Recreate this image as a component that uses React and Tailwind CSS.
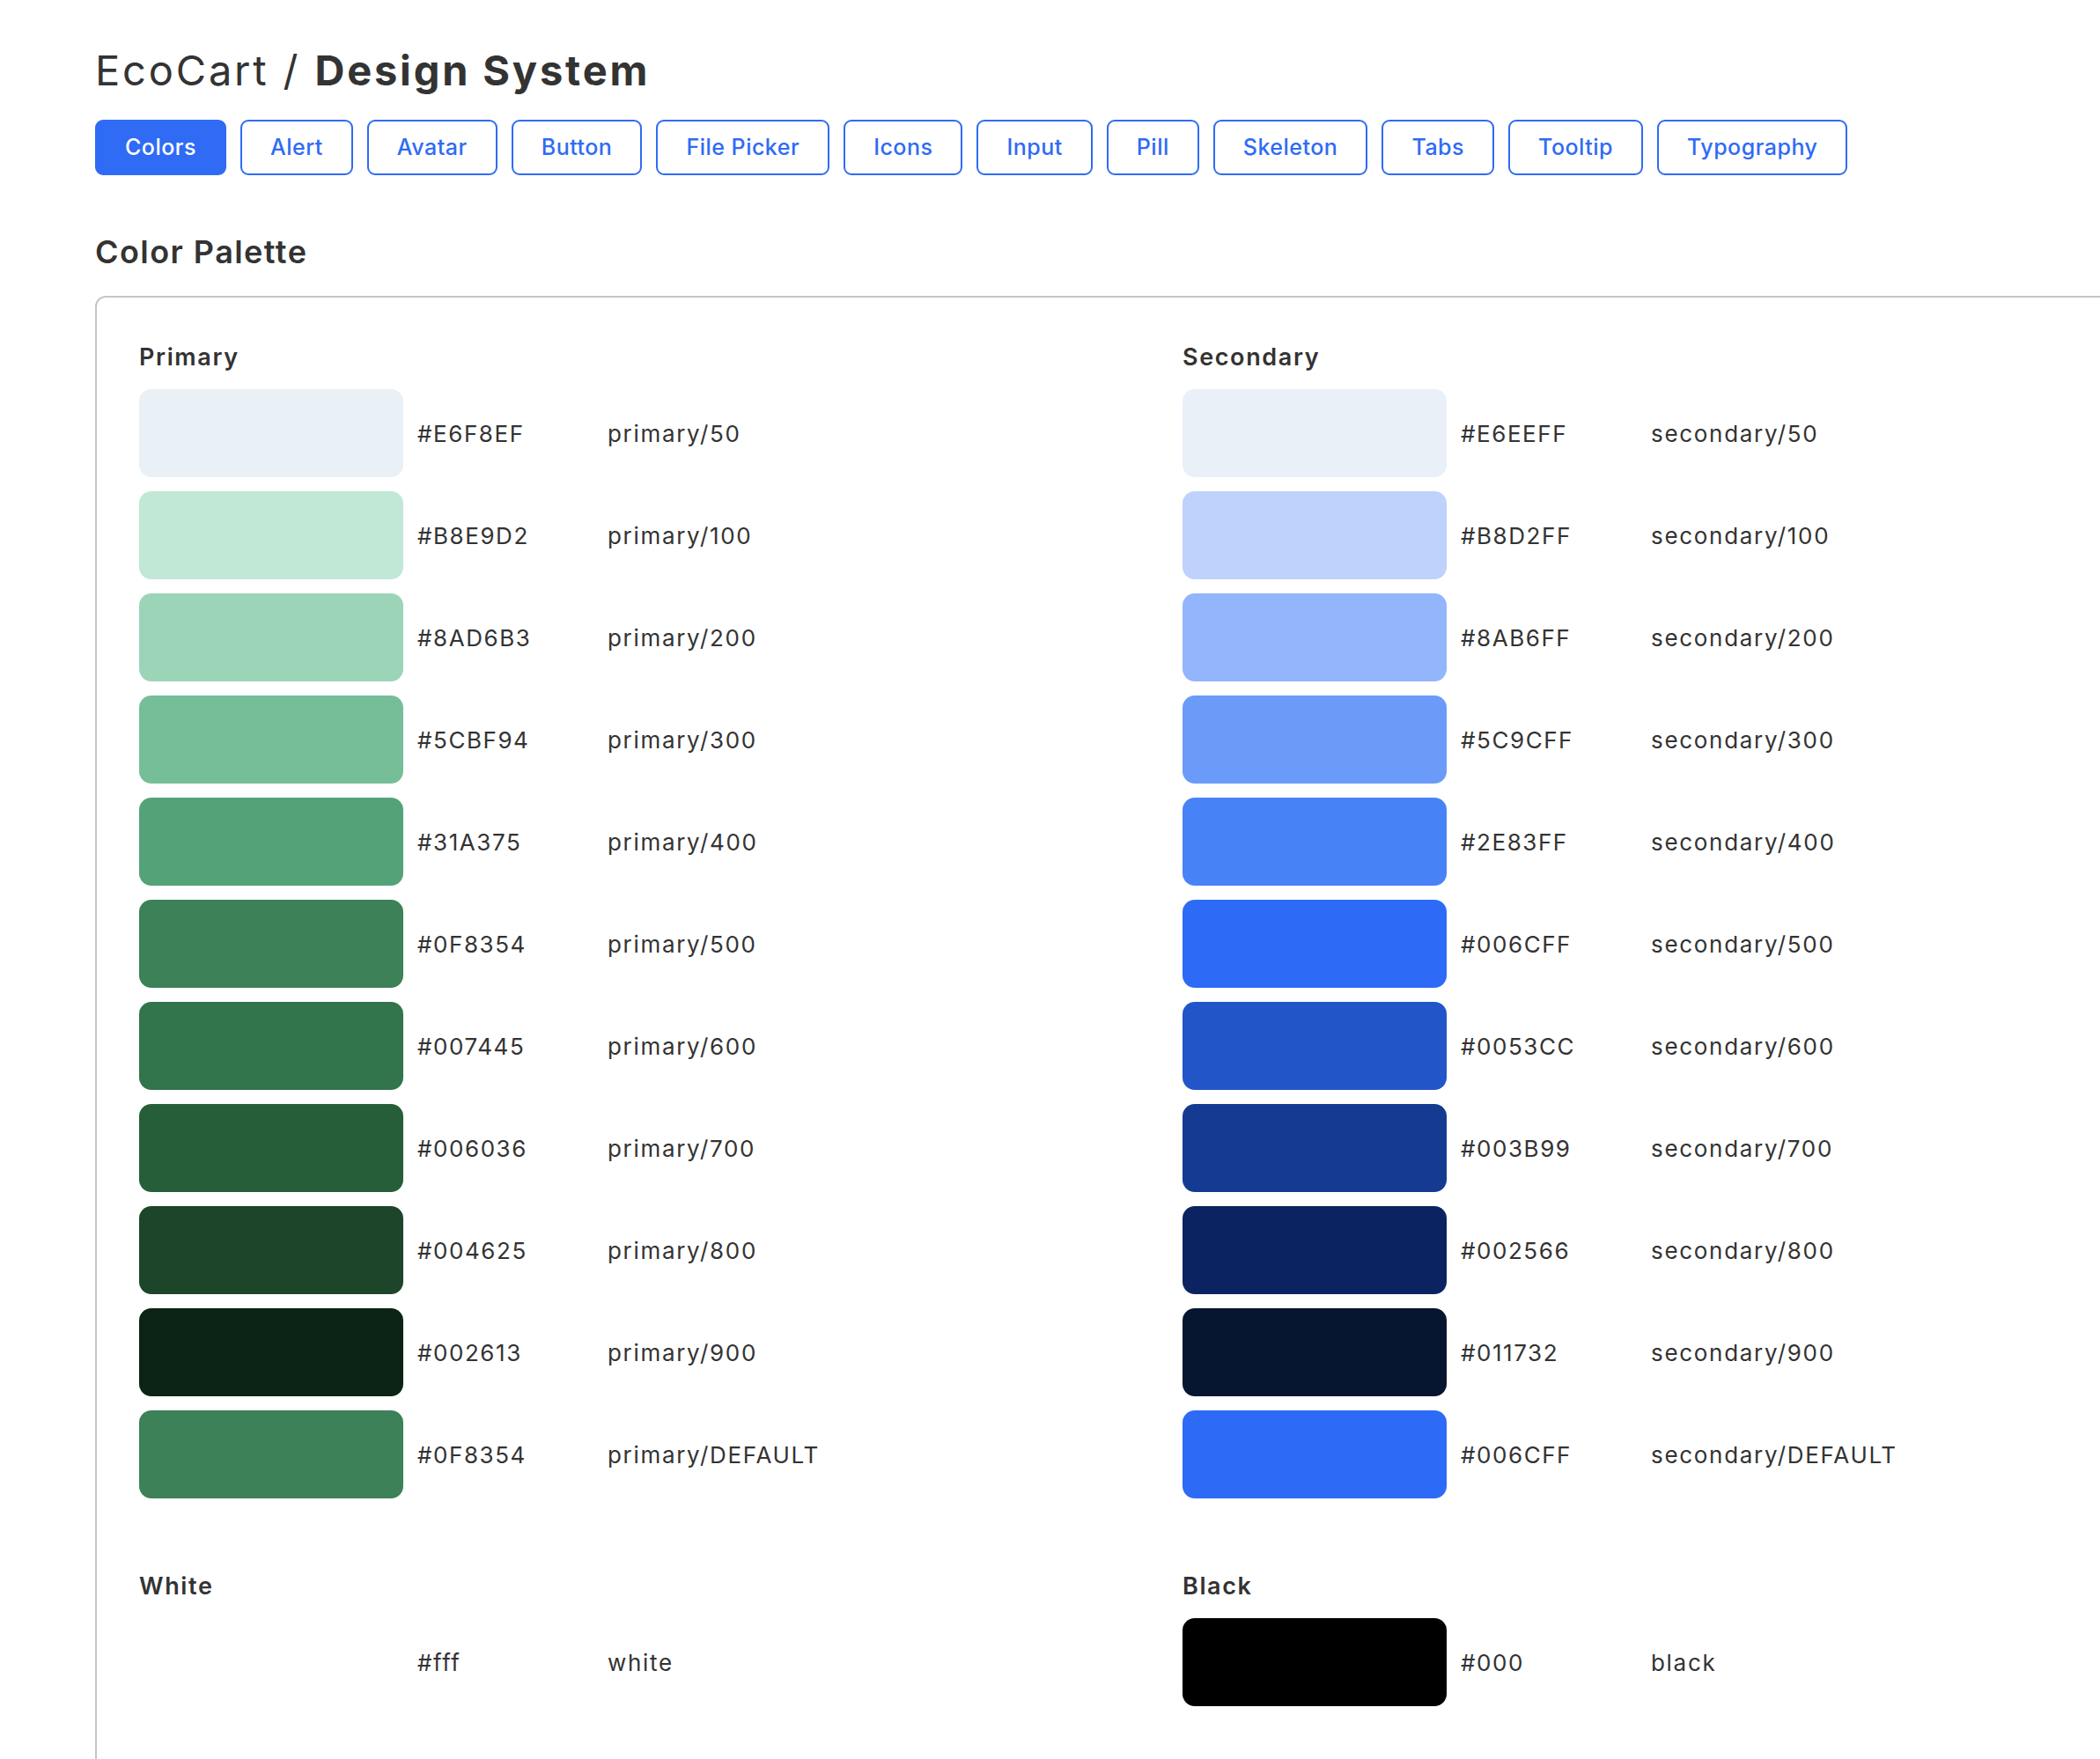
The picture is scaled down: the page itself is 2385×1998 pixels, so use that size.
import React from 'react';

const tabs = ['Colors', 'Alert', 'Avatar', 'Button', 'File Picker', 'Icons', 'Input', 'Pill', 'Skeleton', 'Tabs', 'Tooltip', 'Typography'];

const primary = [
  { hex: '#E6F8EF', name: 'primary/50', swatch: 'bg-[#e9f1f7]' },
  { hex: '#B8E9D2', name: 'primary/100', swatch: 'bg-[#c1e8d6]' },
  { hex: '#8AD6B3', name: 'primary/200', swatch: 'bg-[#9cd4b8]' },
  { hex: '#5CBF94', name: 'primary/300', swatch: 'bg-[#76be98]' },
  { hex: '#31A375', name: 'primary/400', swatch: 'bg-[#54a378]' },
  { hex: '#0F8354', name: 'primary/500', swatch: 'bg-[#3c8158]' },
  { hex: '#007445', name: 'primary/600', swatch: 'bg-[#32744c]' },
  { hex: '#006036', name: 'primary/700', swatch: 'bg-[#265e3a]' },
  { hex: '#004625', name: 'primary/800', swatch: 'bg-[#1c4529]' },
  { hex: '#002613', name: 'primary/900', swatch: 'bg-[#0c2415]' },
  { hex: '#0F8354', name: 'primary/DEFAULT', swatch: 'bg-[#3c8158]' },
];

const secondary = [
  { hex: '#E6EEFF', name: 'secondary/50', swatch: 'bg-[#e9f0f7]' },
  { hex: '#B8D2FF', name: 'secondary/100', swatch: 'bg-[#bfd2fc]' },
  { hex: '#8AB6FF', name: 'secondary/200', swatch: 'bg-[#93b5fb]' },
  { hex: '#5C9CFF', name: 'secondary/300', swatch: 'bg-[#6b9bf8]' },
  { hex: '#2E83FF', name: 'secondary/400', swatch: 'bg-[#4783f7]' },
  { hex: '#006CFF', name: 'secondary/500', swatch: 'bg-[#2d6bf6]' },
  { hex: '#0053CC', name: 'secondary/600', swatch: 'bg-[#2255c8]' },
  { hex: '#003B99', name: 'secondary/700', swatch: 'bg-[#153a91]' },
  { hex: '#002566', name: 'secondary/800', swatch: 'bg-[#0b2461]' },
  { hex: '#011732', name: 'secondary/900', swatch: 'bg-[#061631]' },
  { hex: '#006CFF', name: 'secondary/DEFAULT', swatch: 'bg-[#2d6bf6]' },
];

const ColorRow = ({ hex, name, swatch }) => (
  <div className="flex items-center gap-4 text-[26px] tracking-[0.06em]">
    <div className={`w-[300px] h-[100px] rounded-[14px] shrink-0 ${swatch}`} />
    <span className="w-[200px] shrink-0">{hex}</span>
    <span className="tracking-[0.065em]">{name}</span>
  </div>
);

const ColorGroup = ({ title, colors }) => (
  <div>
    <h3 className="text-[27px] leading-[40px] font-semibold tracking-[0.06em] mb-4">{title}</h3>
    <div className="flex flex-col gap-4">
      {colors.map((c) => (
        <ColorRow key={c.name} {...c} />
      ))}
    </div>
  </div>
);

export default function App() {
  return (
    <div
      className="w-full overflow-hidden bg-white text-[#333333]"
      style={{ fontFamily: 'Inter, "Noto Sans", sans-serif' }}
    >
      <div className="pl-[108px] pt-[52px]">
        <h1 className="text-[47px] leading-[55px] tracking-[0.06em] mb-[29px]">
          EcoCart / <span className="font-bold">Design System</span>
        </h1>

        <div className="flex gap-4">
          {tabs.map((tab, i) => (
            <button
              key={tab}
              className={`h-[63px] px-8 flex items-center rounded-[9px] border-2 border-[#2f6bf5] text-[25px] font-medium tracking-[0.02em] ${
                i === 0 ? 'bg-[#2f6bf5] text-white' : 'bg-white text-[#2f6bf5]'
              }`}
            >
              {tab}
            </button>
          ))}
        </div>

        <h2 className="text-[36px] leading-[44px] font-semibold tracking-[0.04em] mt-[65px] mb-[28px]">Color Palette</h2>

        <div className="w-[2422px] border-2 border-[#c6c6c6] rounded-[12px] px-12 pt-12 pb-24">
          <div className="grid grid-cols-[1137px_1137px] gap-x-12 gap-y-20">
            <ColorGroup title="Primary" colors={primary} />
            <ColorGroup title="Secondary" colors={secondary} />
            <ColorGroup title="White" colors={[{ hex: '#fff', name: 'white', swatch: 'bg-white' }]} />
            <ColorGroup title="Black" colors={[{ hex: '#000', name: 'black', swatch: 'bg-black' }]} />
          </div>
        </div>
      </div>
    </div>
  );
}
